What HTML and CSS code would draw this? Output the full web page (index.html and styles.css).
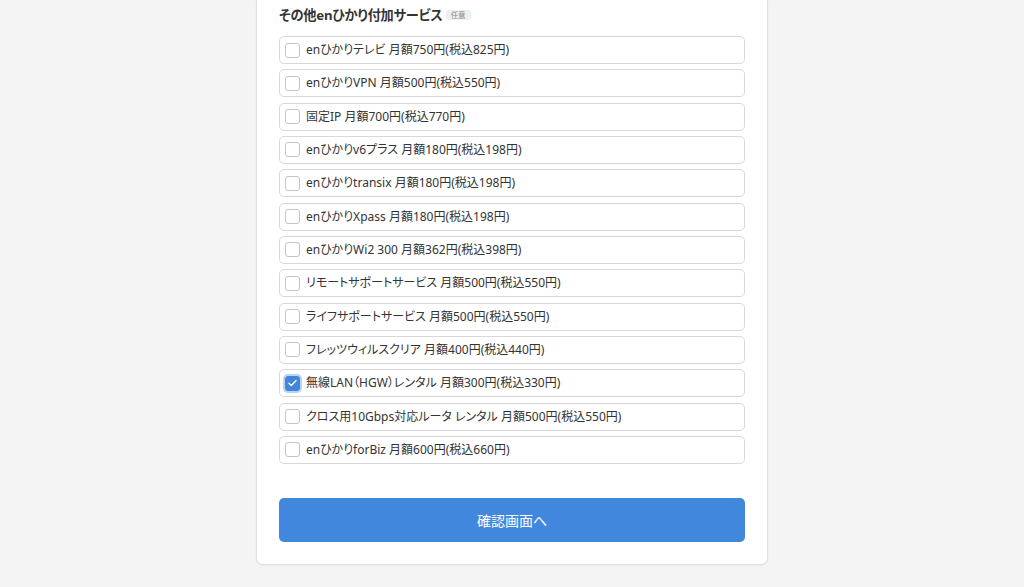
FILE: index.html
```html
<!DOCTYPE html>
<html lang="ja">
<head>
<meta charset="utf-8">
<title>付加サービス</title>
<link rel="stylesheet" href="styles.css">
</head>
<body>
<main class="card">
  <section class="group">
    <h2 class="group-title">その他enひかり付加サービス <span class="badge">任意</span></h2>
    <div class="options">
      <label class="option"><span class="box"></span><span class="label">enひかりテレビ 月額750円(税込825円)</span></label>
      <label class="option"><span class="box"></span><span class="label">enひかりVPN 月額500円(税込550円)</span></label>
      <label class="option"><span class="box"></span><span class="label">固定IP 月額700円(税込770円)</span></label>
      <label class="option"><span class="box"></span><span class="label">enひかりv6プラス 月額180円(税込198円)</span></label>
      <label class="option"><span class="box"></span><span class="label">enひかりtransix 月額180円(税込198円)</span></label>
      <label class="option"><span class="box"></span><span class="label">enひかりXpass 月額180円(税込198円)</span></label>
      <label class="option"><span class="box"></span><span class="label">enひかりWi2 300 月額362円(税込398円)</span></label>
      <label class="option"><span class="box"></span><span class="label">リモートサポートサービス 月額500円(税込550円)</span></label>
      <label class="option"><span class="box"></span><span class="label">ライフサポートサービス 月額500円(税込550円)</span></label>
      <label class="option"><span class="box"></span><span class="label">フレッツウィルスクリア 月額400円(税込440円)</span></label>
      <label class="option"><span class="box checked"><svg viewBox="0 0 16 16" width="16" height="16"><path d="M3.6 8.2 L6.6 11.1 L12.4 4.9" fill="none" stroke="#fff" stroke-width="1.6" stroke-linecap="round" stroke-linejoin="round"/></svg></span><span class="label">無線LAN（HGW）レンタル 月額300円(税込330円)</span></label>
      <label class="option"><span class="box"></span><span class="label">クロス用10Gbps対応ルータ レンタル 月額500円(税込550円)</span></label>
      <label class="option"><span class="box"></span><span class="label">enひかりforBiz 月額600円(税込660円)</span></label>
    </div>
  </section>
  <button class="submit" type="button">確認画面へ</button>
</main>
</body>
</html>
```
FILE: styles.css
```css
html, body {
  margin: 0;
  padding: 0;
  background: #f4f4f4;
}
body {
  font-family: "Noto Sans", "Noto Sans CJK JP", sans-serif;
  color: #333;
  height: 587px;
  overflow: hidden;
}
.card {
  width: 466px;
  margin-left: 256px;
  background: #fff;
  border: 1px solid #e2e2e2;
  border-top: none;
  border-radius: 0 0 7px 7px;
  box-shadow: 0 1px 2px rgba(0,0,0,0.05);
  padding: 5px 22px 22px;
}
.group-title {
  margin: 0;
  font-size: 13.2px;
  font-weight: 700;
  line-height: 20px;
  color: #333;
  display: flex;
  align-items: center;
  gap: 2px;
  font-feature-settings: "palt";
  letter-spacing: -0.2px;
}
.badge {
  display: inline-block;
  font-size: 7.5px;
  font-weight: 400;
  line-height: 10px;
  padding: 0 5px;
  background: #efefef;
  color: #888;
  border-radius: 3px;
  margin-left: 1px;
  letter-spacing: 0;
}
.options {
  margin-top: 11px;
  display: flex;
  flex-direction: column;
  gap: 5.33px;
}
.option {
  display: flex;
  align-items: center;
  gap: 6px;
  height: 28px;
  box-sizing: border-box;
  border: 1px solid #d8d8d8;
  border-radius: 5px;
  padding: 0 5px;
  font-size: 12px;
  color: #333;
  font-feature-settings: "palt";
}
.box {
  width: 15px;
  height: 15px;
  box-sizing: border-box;
  border: 1px solid #c4c4c4;
  border-radius: 3px;
  background: #fff;
  flex: none;
  display: flex;
  align-items: center;
  justify-content: center;
}
.box.checked {
  background: #4285dc;
  border-color: #4285dc;
  box-shadow: 0 0 0 2px #b9d3f3;
}
.box.checked svg {
  width: 14px;
  height: 14px;
}
.label {
  line-height: 1;
  white-space: nowrap;
}
.submit {
  display: block;
  width: 100%;
  margin-top: 34px;
  height: 44px;
  border: none;
  border-radius: 5px;
  background: #4287de;
  color: #fff;
  font-family: inherit;
  font-size: 14px;
  font-weight: 400;
}
```
